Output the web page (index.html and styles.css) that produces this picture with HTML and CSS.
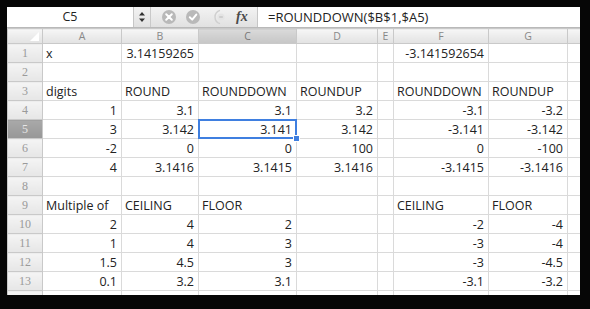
FILE: index.html
```
<!DOCTYPE html>
<html lang="en">
<head>
    <meta charset="UTF-8">
    <title>ROUNDDOWN</title>
    <link rel="stylesheet" href="styles.css">
</head>
<body>

<div class="window">
    <div class="fbar">
        <div class="namebox">C5</div>
        <div class="spin">
            <svg width="8" height="12" viewBox="0 0 8 12"><path d="M4 1 L7 4.5 H1 Z M4 11 L7 7.5 H1 Z" fill="#333"/></svg>
        </div>
        <div class="tools">
            <svg class="btn" width="16" height="16" viewBox="0 0 16 16"><circle cx="8" cy="8" r="7" fill="#b9b9b9"/><path d="M5.2 5.2 L10.8 10.8 M10.8 5.2 L5.2 10.8" stroke="#fff" stroke-width="2" stroke-linecap="round"/></svg>
            <svg class="btn" width="16" height="16" viewBox="0 0 16 16"><circle cx="8" cy="8" r="7" fill="#b9b9b9"/><path d="M4.8 8.3 L7.2 10.6 L11.3 5.6" stroke="#fff" stroke-width="2" fill="none" stroke-linecap="round" stroke-linejoin="round"/></svg>
            <svg class="btn eq" width="16" height="16" viewBox="0 0 16 16"><path d="M9 1.3 A7 7 0 0 0 9 14.7" stroke="#cfcfcf" stroke-width="1.4" fill="none"/><circle cx="10" cy="8" r="3.6" fill="#e4e4e4"/><path d="M8.2 8 H11.8" stroke="#c4c4c4" stroke-width="1.4"/></svg>
            <span class="fx">fx</span>
        </div>
        <div class="formula">=ROUNDDOWN($B$1,$A5)</div>
    </div>

    <table class="sheet">
        <colgroup>
            <col class="w-row"><col class="w-a"><col class="w-b"><col class="w-c"><col class="w-d"><col class="w-e"><col class="w-f"><col class="w-g"><col class="w-h">
        </colgroup>
        <tr class="cols">
            <th class="corner"><span class="tri"></span></th><th>A</th><th>B</th><th class="cur">C</th><th>D</th><th>E</th><th>F</th><th>G</th><th></th>
        </tr>
        <tr><th>1</th><td>x</td><td class="n">3.14159265</td><td></td><td></td><td></td><td class="n">-3.141592654</td><td></td><td></td></tr>
        <tr><th>2</th><td></td><td></td><td></td><td></td><td></td><td></td><td></td><td></td></tr>
        <tr><th>3</th><td>digits</td><td>ROUND</td><td>ROUNDDOWN</td><td>ROUNDUP</td><td></td><td>ROUNDDOWN</td><td>ROUNDUP</td><td></td></tr>
        <tr><th>4</th><td class="n">1</td><td class="n">3.1</td><td class="n">3.1</td><td class="n">3.2</td><td></td><td class="n">-3.1</td><td class="n">-3.2</td><td></td></tr>
        <tr><th class="cur-row">5</th><td class="n">3</td><td class="n">3.142</td><td class="n sel">3.141</td><td class="n">3.142</td><td></td><td class="n">-3.141</td><td class="n">-3.142</td><td></td></tr>
        <tr><th>6</th><td class="n">-2</td><td class="n">0</td><td class="n">0</td><td class="n">100</td><td></td><td class="n">0</td><td class="n">-100</td><td></td></tr>
        <tr><th>7</th><td class="n">4</td><td class="n">3.1416</td><td class="n">3.1415</td><td class="n">3.1416</td><td></td><td class="n">-3.1415</td><td class="n">-3.1416</td><td></td></tr>
        <tr><th>8</th><td></td><td></td><td></td><td></td><td></td><td></td><td></td><td></td></tr>
        <tr><th>9</th><td>Multiple of</td><td>CEILING</td><td>FLOOR</td><td></td><td></td><td>CEILING</td><td>FLOOR</td><td></td></tr>
        <tr><th>10</th><td class="n">2</td><td class="n">4</td><td class="n">2</td><td></td><td></td><td class="n">-2</td><td class="n">-4</td><td></td></tr>
        <tr><th>11</th><td class="n">1</td><td class="n">4</td><td class="n">3</td><td></td><td></td><td class="n">-3</td><td class="n">-4</td><td></td></tr>
        <tr><th>12</th><td class="n">1.5</td><td class="n">4.5</td><td class="n">3</td><td></td><td></td><td class="n">-3</td><td class="n">-4.5</td><td></td></tr>
        <tr><th>13</th><td class="n">0.1</td><td class="n">3.2</td><td class="n">3.1</td><td></td><td></td><td class="n">-3.1</td><td class="n">-3.2</td><td></td></tr>
        <tr><th>14</th><td></td><td></td><td></td><td></td><td></td><td></td><td></td><td></td></tr>
    </table>
</div>

</body>
</html>
```

FILE: styles.css
```
body {
    margin: 0;
    background: #060606;
    font-family: "Open Sans", "Liberation Sans", sans-serif;
    color: #222;
}
.window {
    margin: 7px 10px 0 7px;
    height: 288px;
    background: #fff;
    overflow: hidden;
}

/* formula bar */
.fbar {
    display: flex;
    height: 21px;
    box-sizing: border-box;
    background: linear-gradient(#f3f3f3, #e1e1e1);
    border-bottom: 1px solid #b9b9b9;
}
.namebox {
    width: 126px;
    background: #fff;
    border-right: 1px solid #c6c6c6;
    text-align: center;
    font-size: 12.5px;
    line-height: 20px;
}
.spin {
    width: 16px;
    border-right: 1px solid #c9c9c9;
    display: flex;
    align-items: center;
    justify-content: center;
}
.tools {
    width: 106px;
    display: flex;
    align-items: center;
    padding-left: 10px;
    box-sizing: border-box;
}
.btn {
    margin-right: 8px;
}
.btn.eq {
    margin-left: 2px;
    margin-right: 9px;
}
.fx {
    font-family: "Liberation Serif", serif;
    font-style: italic;
    font-weight: bold;
    font-size: 14px;
    color: #4a4a4a;
}
.formula {
    flex: 1;
    background: #fff;
    border-left: 1px solid #c6c6c6;
    padding-left: 10px;
    font-size: 13px;
    line-height: 20px;
}

/* grid */
.sheet {
    border-collapse: collapse;
    table-layout: fixed;
    width: 573px;
    font-size: 12.5px;
}
.w-row { width: 35px; }
.w-a { width: 79px; }
.w-b { width: 77px; }
.w-c { width: 98px; }
.w-d { width: 81px; }
.w-e { width: 16px; }
.w-f { width: 95px; }
.w-g { width: 79px; }
.w-h { width: 13px; }

.sheet tr {
    height: 19px;
}
.sheet td {
    border: 1px solid #dadada;
    padding: 0 3px;
    white-space: nowrap;
    overflow: hidden;
    line-height: 17px;
}
.sheet td.n {
    text-align: right;
    padding-right: 4px;
}
.sheet th {
    border: 1px solid #c9c9c9;
    background: linear-gradient(#f4f4f4, #e6e6e6);
    font-weight: normal;
    color: #9a9a9a;
    padding: 0;
    font-family: "Liberation Serif", serif;
    font-size: 12px;
}
.sheet tr.cols {
    height: 15px;
}
.sheet tr.cols th {
    font-family: "Open Sans", sans-serif;
    font-size: 10.5px;
    line-height: 13px;
    color: #888;
    background: linear-gradient(#f6f6f6, #e2e2e2);
}
.sheet tr.cols th.cur {
    background: linear-gradient(#dadada, #c6c6c6);
    color: #777;
}
.sheet th.cur-row {
    background: linear-gradient(#a9a9a9, #979797);
    color: #e6e6e6;
}
.corner {
    position: relative;
}
.tri {
    position: absolute;
    right: 3px;
    bottom: 2px;
    width: 0;
    height: 0;
    border-left: 9px solid transparent;
    border-bottom: 9px solid #fff;
}

/* active cell */
.sheet td.sel {
    position: relative;
    overflow: visible;
}
.sel::after {
    content: "";
    position: absolute;
    left: -1px;
    top: -1px;
    right: -1px;
    bottom: -1px;
    border: 2px solid #3f7fe0;
    pointer-events: none;
}
.sel::before {
    content: "";
    position: absolute;
    right: -4px;
    bottom: -4px;
    width: 5px;
    height: 5px;
    background: #3f7fe0;
    border: 1px solid #fff;
    z-index: 1;
}
```
